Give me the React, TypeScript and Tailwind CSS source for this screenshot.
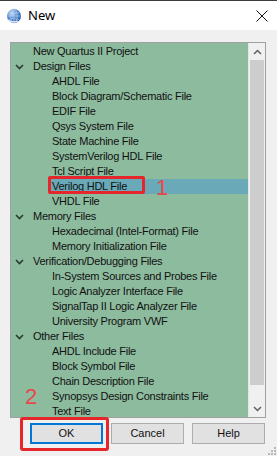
import React from "react";

type Row = { label: string; level: 0 | 1; group?: boolean; selected?: boolean };

const rows: Row[] = [
  { label: "New Quartus II Project", level: 0 },
  { label: "Design Files", level: 0, group: true },
  { label: "AHDL File", level: 1 },
  { label: "Block Diagram/Schematic File", level: 1 },
  { label: "EDIF File", level: 1 },
  { label: "Qsys System File", level: 1 },
  { label: "State Machine File", level: 1 },
  { label: "SystemVerilog HDL File", level: 1 },
  { label: "Tcl Script File", level: 1 },
  { label: "Verilog HDL File", level: 1, selected: true },
  { label: "VHDL File", level: 1 },
  { label: "Memory Files", level: 0, group: true },
  { label: "Hexadecimal (Intel-Format) File", level: 1 },
  { label: "Memory Initialization File", level: 1 },
  { label: "Verification/Debugging Files", level: 0, group: true },
  { label: "In-System Sources and Probes File", level: 1 },
  { label: "Logic Analyzer Interface File", level: 1 },
  { label: "SignalTap II Logic Analyzer File", level: 1 },
  { label: "University Program VWF", level: 1 },
  { label: "Other Files", level: 0, group: true },
  { label: "AHDL Include File", level: 1 },
  { label: "Block Symbol File", level: 1 },
  { label: "Chain Description File", level: 1 },
  { label: "Synopsys Design Constraints File", level: 1 },
  { label: "Text File", level: 1 },
];

function Chevron() {
  return (
    <svg width="9" height="6" viewBox="0 0 9 6" className="block">
      <path d="M1 1 L4.5 4.5 L8 1" fill="none" stroke="#2a3a30" strokeWidth="1.6" />
    </svg>
  );
}

function GlobeIcon() {
  return (
    <svg width="16" height="16" viewBox="0 0 16 16" className="block">
      <defs>
        <radialGradient id="g" cx="0.35" cy="0.3" r="0.8">
          <stop offset="0" stopColor="#dcecff" />
          <stop offset="0.45" stopColor="#5b8fd0" />
          <stop offset="1" stopColor="#1e4f9a" />
        </radialGradient>
      </defs>
      <circle cx="8" cy="8" r="7" fill="url(#g)" />
      <path d="M1.5 8 H14.5 M8 1 V15 M3 4.5 Q8 6.5 13 4.5 M3 11.5 Q8 9.5 13 11.5" stroke="#a9c6ee" strokeWidth="0.7" fill="none" />
      <ellipse cx="8" cy="8" rx="3.2" ry="7" stroke="#a9c6ee" strokeWidth="0.7" fill="none" />
      <path d="M2 12 Q6 15 12 13" stroke="#e8f0ff" strokeWidth="1.2" fill="none" />
    </svg>
  );
}

const sans = '"Liberation Sans", Arial, sans-serif';

export default function App() {
  return (
    <div
      className="relative w-[277px] h-[456px] bg-[#f0f0f0] overflow-hidden text-[#111]"
      style={{ fontFamily: sans }}
    >
      {/* Title bar */}
      <div className="h-[30px] bg-white border-t border-[#3c3c3c] flex items-center">
        <div className="ml-[6px] mt-[1px]">
          <GlobeIcon />
        </div>
        <span
          className="ml-[6px] text-[13px] text-black"
          style={{ fontFamily: '"Noto Sans", "Open Sans", sans-serif' }}
        >
          New
        </span>
        <div className="ml-auto mr-[9px]">
          <svg width="12" height="12" viewBox="0 0 12 12" className="block">
            <path d="M0.5 0.5 L11.5 11.5 M11.5 0.5 L0.5 11.5" stroke="#111" strokeWidth="1" />
          </svg>
        </div>
      </div>

      {/* List box */}
      <div className="mt-[12px] ml-[10px] w-[256px] h-[376px] border border-[#a0a0a0] bg-[#8dbb9e] flex">
        <div className="flex-1 pt-[1px] overflow-hidden">
          {rows.map((r, i) => (
            <div
              key={i}
              className={`h-[15px] flex items-center text-[11px] tracking-[-0.25px] leading-none whitespace-nowrap ${
                r.level === 0 ? "pl-[4px]" : "pl-[38px]"
              }`}
            >
              {r.level === 0 ? (
                <>
                  <div className="w-[18px] flex items-center">
                    {r.group ? <Chevron /> : null}
                  </div>
                  <span>{r.label}</span>
                </>
              ) : (
                <div
                  className={`h-full flex items-center flex-1 pl-[3px] ${
                    r.selected ? "bg-[#6aa9b7]" : ""
                  }`}
                >
                  <span>{r.label}</span>
                </div>
              )}
            </div>
          ))}
        </div>
        {/* Scrollbar */}
        <div className="w-[17px] bg-[#f0f0f0] flex flex-col border-l border-[#e6e6e6]">
          <div className="h-[17px] flex items-center justify-center">
            <svg width="9" height="6" viewBox="0 0 9 6" className="block">
              <path d="M1 5 L4.5 1.5 L8 5" fill="none" stroke="#606060" strokeWidth="1.5" />
            </svg>
          </div>
          <div className="mx-[1px] h-[325px] bg-[#cdcdcd]" />
          <div className="flex-1" />
          <div className="h-[17px] flex items-center justify-center">
            <svg width="9" height="6" viewBox="0 0 9 6" className="block">
              <path d="M1 1 L4.5 4.5 L8 1" fill="none" stroke="#606060" strokeWidth="1.5" />
            </svg>
          </div>
        </div>
      </div>

      {/* Buttons */}
      <div className="mt-[5px] pr-[12px] flex justify-end gap-[8px] text-[11px]">
        <button className="w-[73px] h-[21px] bg-[#e1e1e1] border-2 border-[#0078d7] flex items-center justify-center">
          OK
        </button>
        <button className="w-[73px] h-[21px] bg-[#e1e1e1] border border-[#adadad] flex items-center justify-center">
          Cancel
        </button>
        <button className="w-[73px] h-[21px] bg-[#e1e1e1] border border-[#adadad] flex items-center justify-center">
          Help
        </button>
      </div>

      {/* Resize grip */}
      <div className="absolute right-[1px] bottom-[1px] grid grid-cols-3 gap-[1px]">
        <span className="w-[2px] h-[2px]" />
        <span className="w-[2px] h-[2px]" />
        <span className="w-[2px] h-[2px] bg-[#b8b8b8]" />
        <span className="w-[2px] h-[2px]" />
        <span className="w-[2px] h-[2px] bg-[#b8b8b8]" />
        <span className="w-[2px] h-[2px] bg-[#b8b8b8]" />
        <span className="w-[2px] h-[2px] bg-[#b8b8b8]" />
        <span className="w-[2px] h-[2px] bg-[#b8b8b8]" />
        <span className="w-[2px] h-[2px] bg-[#b8b8b8]" />
      </div>

      {/* Annotations */}
      <div className="absolute left-[48px] top-[176px] w-[97px] h-[18px] border-[3px] border-[#e5262b] rounded-[2px]" />
      <div className="absolute left-[156px] top-[177px] text-[22px] leading-none text-[#e8474c]">1</div>
      <div className="absolute left-[25px] top-[386px] text-[22px] leading-none text-[#e8474c]">2</div>
      <div className="absolute left-[20px] top-[417px] w-[89px] h-[34px] border-[3px] border-[#e5262b] rounded-[3px]" />
    </div>
  );
}
